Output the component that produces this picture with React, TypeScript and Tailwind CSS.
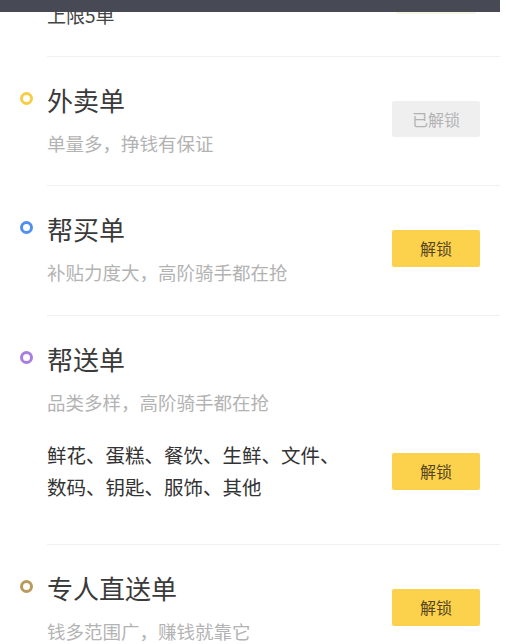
import React from "react";

type Order = {
  title: string;
  desc: string;
  dot: string;
  unlocked?: boolean;
  items?: string[];
};

const orders: Order[] = [
  { title: "外卖单", desc: "单量多，挣钱有保证", dot: "border-[#f7cd45]", unlocked: true },
  { title: "帮买单", desc: "补贴力度大，高阶骑手都在抢", dot: "border-[#4f8ff0]" },
  {
    title: "帮送单",
    desc: "品类多样，高阶骑手都在抢",
    dot: "border-[#a77ee0]",
    items: ["鲜花、蛋糕、餐饮、生鲜、文件、", "数码、钥匙、服饰、其他"],
  },
  { title: "专人直送单", desc: "钱多范围广，赚钱就靠它", dot: "border-[#b99a5c]" },
];

const UnlockButton = ({ unlocked }: { unlocked?: boolean }) =>
  unlocked ? (
    <div className="w-[88px] h-9 shrink-0 rounded-[2px] bg-[#efefef] text-[#b3b3b3] text-[16px] flex items-center justify-center">
      已解锁
    </div>
  ) : (
    <div className="w-[88px] h-[37px] shrink-0 rounded-[2px] bg-[#fcd14c] text-[#55461f] text-[16px] flex items-center justify-center">
      解锁
    </div>
  );

const Heading = ({ order }: { order: Order }) => (
  <div>
    <div className="flex items-center h-9">
      <span className={`-ml-[27px] mr-[14px] w-[13px] h-[13px] rounded-full border-[3px] ${order.dot} -mt-1`} />
      <span className="text-[26px] leading-9 text-[#3a3a3a]">{order.title}</span>
    </div>
    <div className="mt-3 text-[18.5px] leading-[26px] text-[#b3b3b3]">{order.desc}</div>
  </div>
);

export default function App() {
  return (
    <div
      className="relative w-[506px] h-[644px] overflow-hidden bg-white"
      style={{ fontFamily: '"Noto Sans CJK SC", "Noto Sans", sans-serif' }}
    >
      {/* status bar over content */}
      <div className="absolute top-0 left-0 w-[500px] h-3 bg-[#474a55] z-10" />
      <div className="absolute top-3 left-[396px] w-[80px] h-[2px] bg-[#f7f5e4]" />

      <div className="ml-[47px] w-[453px]">
        <div className="pt-[2px] pb-[28px] border-b border-[#f1f1f1] text-[19px] leading-[26px] text-[#444]">
          上限5单
        </div>

        {orders.map((o, i) => (
          <div
            key={o.title}
            className={`border-b border-[#f1f1f1] pr-5 pt-[25px] ${i === 0 ? "pb-[29px]" : "pb-[30px]"}`}
          >
            {o.items ? (
              <>
                <Heading order={o} />
                <div className="mt-6 flex items-center justify-between pb-[11px]">
                  <div className="text-[19.5px] leading-8 text-[#333]">
                    {o.items.map((line) => (
                      <div key={line}>{line}</div>
                    ))}
                  </div>
                  <UnlockButton />
                </div>
              </>
            ) : (
              <div className="flex items-center justify-between">
                <Heading order={o} />
                <UnlockButton unlocked={o.unlocked} />
              </div>
            )}
          </div>
        ))}
      </div>
    </div>
  );
}
